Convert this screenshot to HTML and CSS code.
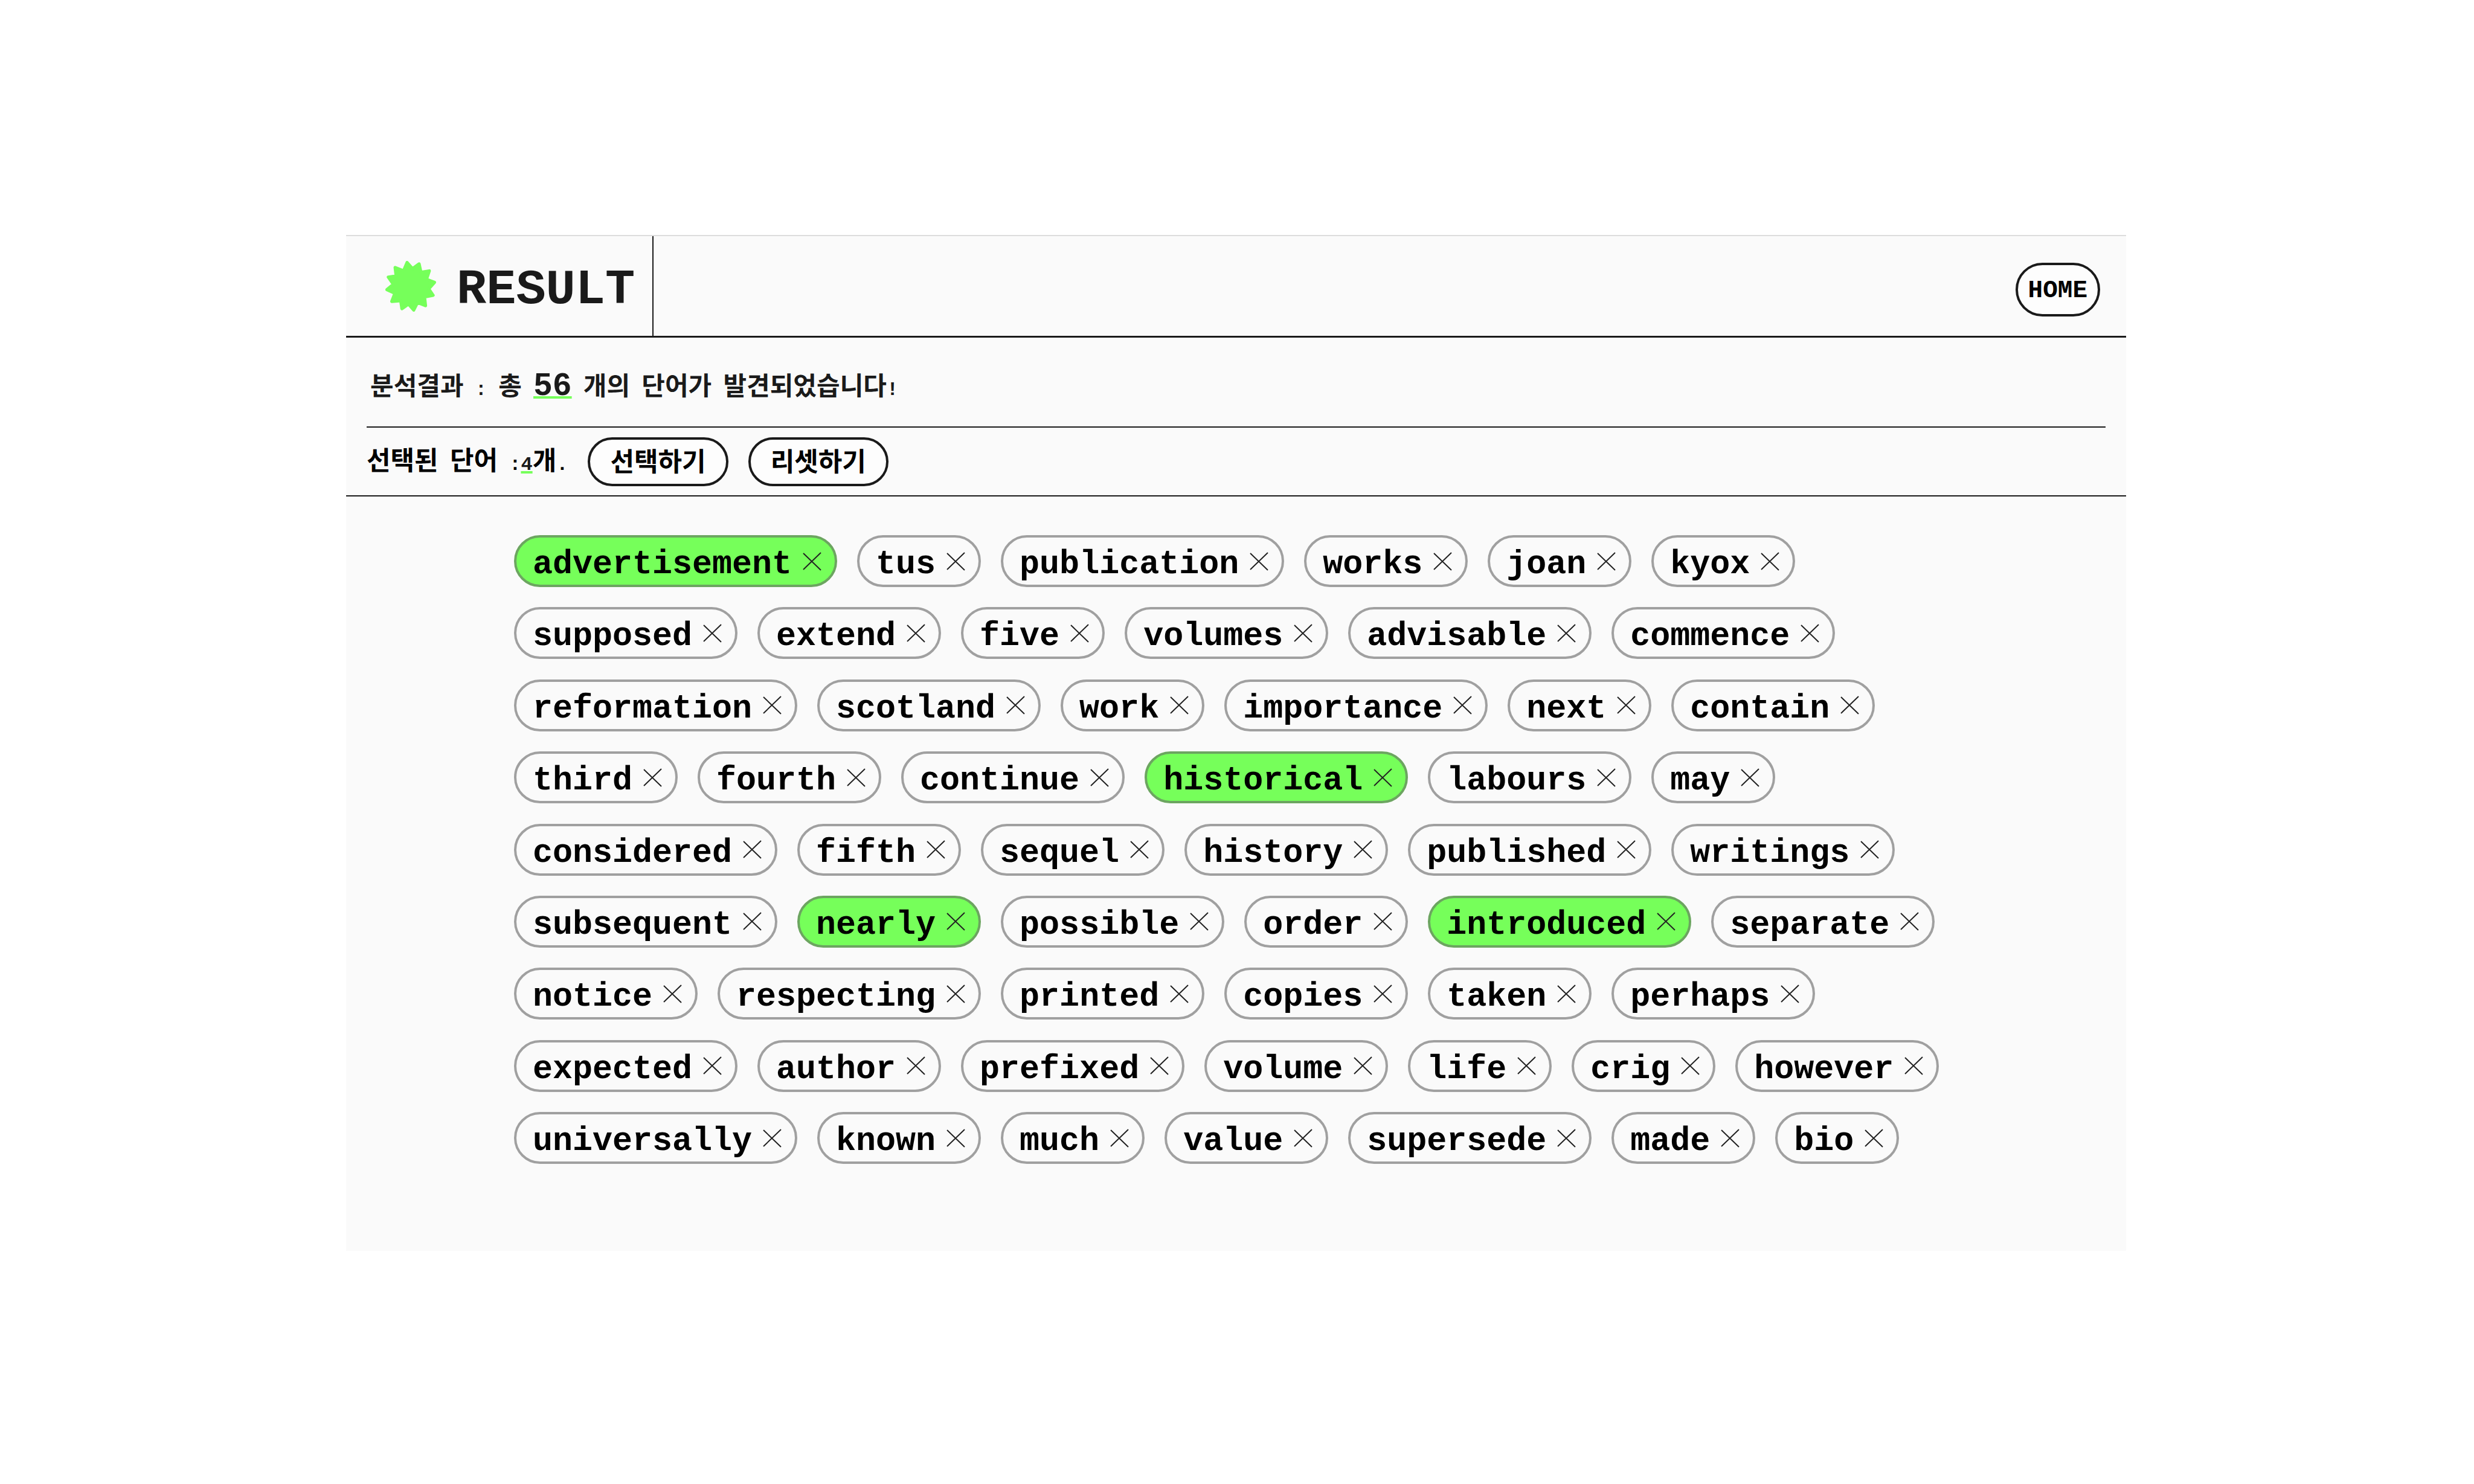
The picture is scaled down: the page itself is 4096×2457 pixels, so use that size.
FILE: index.html
```html
<!DOCTYPE html>
<html lang="ko">
<head>
<meta charset="utf-8">
<title>Result</title>
<link rel="stylesheet" href="styles.css">
</head>
<body>
<main class="panel">
  <header class="topbar">
    <div class="brand">
      <svg class="brand-mark" viewBox="0 0 254 254" aria-hidden="true"><path d="M109 8L136 39L169 15L178 57L220 50L206 92L246 107L217 140L239 172L196 180L201 224L161 208L142 246L116 216L83 239L77 199L32 203L48 162L8 144L40 117L15 81L54 75L49 33L91 50Z"/></svg>
      <h1 class="brand-name">RESULT</h1>
    </div>
    <button class="pill home" type="button">HOME</button>
  </header>
  <section class="summary">
    <p class="line"><span class="ko">분석결과</span> : <span class="ko">총</span> <strong class="total">56</strong> <span class="ko">개의</span> <span class="ko">단어가</span> <span class="ko">발견되었습니다</span>!</p>
  </section>
  <section class="selection">
    <p class="line picked"><span class="ko">선택된</span> <span class="ko">단어</span> :<span class="count">4</span><span class="ko">개</span>.</p>
    <button class="pill action" type="button">선택하기</button>
    <button class="pill action" type="button">리셋하기</button>
  </section>
  <ul class="words" id="words"></ul>
</main>
<script src="words.js"></script>
</body>
</html>
```
FILE: words.js
```js
const words = `advertisement tus publication works joan kyox
supposed extend five volumes advisable commence
reformation scotland work importance next contain
third fourth continue historical labours may
considered fifth sequel history published writings
subsequent nearly possible order introduced separate
notice respecting printed copies taken perhaps
expected author prefixed volume life crig however
universally known much value supersede made bio`.split(/\s+/);
const selected = new Set(["advertisement", "historical", "nearly", "introduced"]);

document.getElementById("words").innerHTML = words.map((word) => `
  <li class="chip${selected.has(word) ? " is-selected" : ""}">
    <button class="word" type="button" aria-pressed="${selected.has(word)}">${word}</button>
    <button class="remove" type="button" aria-label="${word} 삭제">
      <svg class="cross" viewBox="0 0 31 31" aria-hidden="true"><path d="M1 2L30 30M30 1L1 29"/></svg>
    </button>
  </li>`).join("");
```
FILE: styles.css
```css
:root {
  --ink: #1a1a1a;
  --green: #76ff5a;
  --paper: #fafafa;
  --mono: "Liberation Mono", "Noto Sans CJK KR", monospace;
}

* {
  box-sizing: border-box;
  margin: 0;
  padding: 0;
}

body {
  padding: 389px 576px 0 573px;
  background: #fff;
  color: var(--ink);
  font-family: var(--mono);
  font-weight: 700;
}

button {
  border: 0;
  background: none;
  color: #000;
  font: inherit;
  cursor: pointer;
}

.panel {
  border-top: 2px solid #ddd;
  background: var(--paper);
}

.topbar {
  display: flex;
  justify-content: space-between;
  align-items: center;
  padding-right: 43px;
  border-bottom: 3px solid var(--ink);
}

.brand {
  display: flex;
  align-items: center;
  gap: 34px;
  height: 165px;
  padding: 0 29px 0 65px;
  border-right: 2px solid var(--ink);
}

.brand-mark {
  width: 84px;
  height: 84px;
  fill: var(--green);
  stroke: var(--green);
  stroke-width: 16;
  stroke-linejoin: round;
}

.brand-name {
  padding-top: 14px;
  font-size: 82px;
  line-height: 88px;
}

.pill {
  border: 4px solid var(--ink);
  border-radius: 45px;
  background: #fdfdfd;
}

.home {
  height: 89px;
  padding: 4px 17px 0;
  margin-top: 11px;
  font-size: 41px;
}

.summary {
  display: flex;
  align-items: center;
  min-height: 149px;
  margin: 0 34px;
  padding: 20px 6px 0;
  border-bottom: 2px solid var(--ink);
}

.line {
  font-size: 32px;
  line-height: 56px;
  white-space: nowrap;
}

.ko {
  font-size: 43px;
}

.summary .ko {
  font-size: 42px;
}

.total,
.count {
  color: var(--ink);
  text-decoration: underline 4px var(--green);
  text-decoration-skip-ink: none;
  text-underline-offset: 2px;
}

.total {
  font-size: 53px;
}

.selection {
  display: flex;
  align-items: center;
  gap: 33px;
  min-height: 114px;
  padding: 0 34px;
  border-bottom: 2px solid var(--ink);
}

.picked {
  padding-top: 8px;
  color: #000;
}

.action {
  height: 81px;
  padding: 0 33px 6px;
  font-size: 43px;
}

.words {
  display: flex;
  flex-wrap: wrap;
  align-content: space-between;
  column-gap: 33px;
  min-height: 1249px;
  padding: 64px 278px 144px;
  list-style: none;
}

.chip {
  display: flex;
  align-items: center;
  gap: 18px;
  height: 86px;
  padding: 0 22px 0 27px;
  border: 4px solid #a0a0a0;
  border-radius: 43px;
}

.is-selected {
  border-color: #6ca560;
  background: var(--green);
}

.word {
  padding-top: 12px;
  font-size: 55px;
  line-height: 62px;
}

.remove,
.cross {
  display: block;
  width: 31px;
  height: 31px;
}

.cross {
  fill: none;
  stroke: #222;
  stroke-width: 2;
}
```
